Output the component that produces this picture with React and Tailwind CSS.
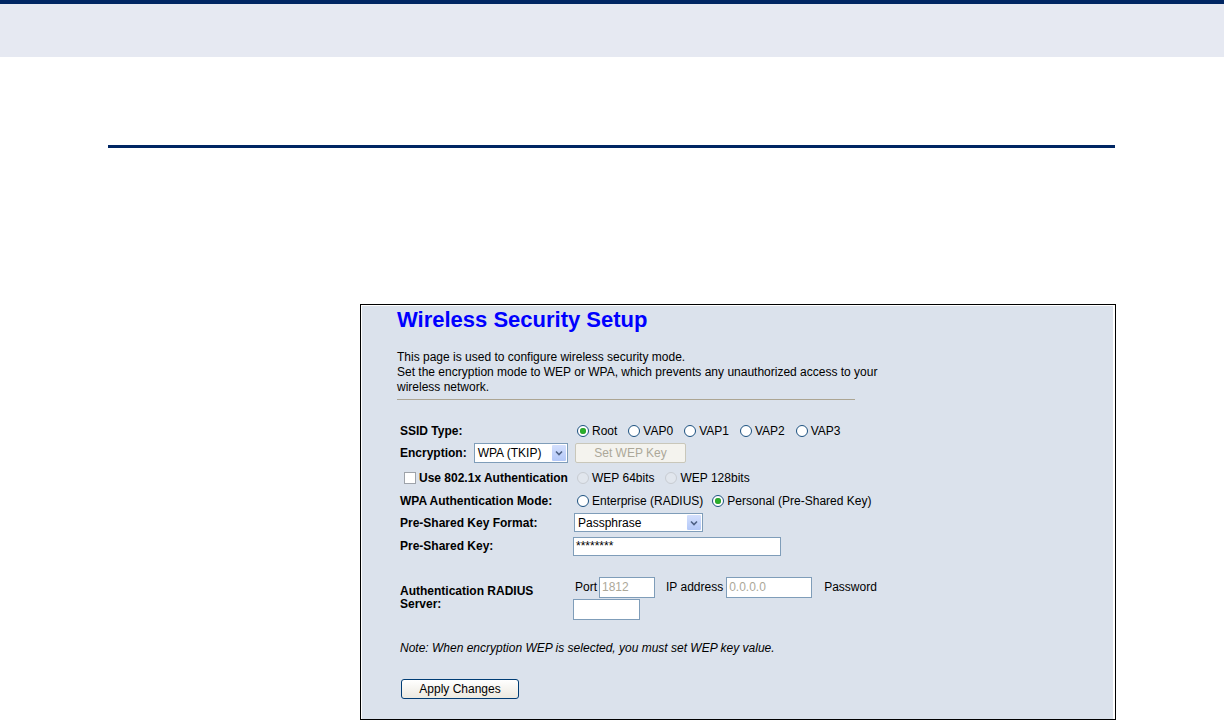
import React from "react";

function Radio({ checked = false, disabled = false }) {
  if (disabled) {
    return (
      <span className="inline-block w-[12px] h-[12px] rounded-full border border-[#c8ccd2] bg-[#e1e6ed] shrink-0" />
    );
  }
  return (
    <span className="inline-flex items-center justify-center w-[12px] h-[12px] rounded-full border border-[#1c5180] bg-white shrink-0">
      {checked && <span className="block w-[6px] h-[6px] rounded-full bg-[#2bb02b] shadow-[inset_0_0_1px_#0a6a0a]" />}
    </span>
  );
}

function RadioOpt({ label, checked, disabled }) {
  return (
    <span className="inline-flex items-center gap-[3px]">
      <Radio checked={checked} disabled={disabled} />
      <span className="text-black">{label}</span>
    </span>
  );
}

function Select({ value, width, height }) {
  return (
    <div
      className="flex items-center justify-between border border-[#7f9db9] bg-white"
      style={{ width, height }}
    >
      <span className="pl-[3px] text-[12px] leading-none text-black">{value}</span>
      <span className="flex items-center justify-center h-full w-[16px] border border-white bg-gradient-to-b from-[#d4e0fd] to-[#b3c8f8] rounded-[2px]">
        <svg width="8" height="6" viewBox="0 0 8 6">
          <path d="M1 1.5 L4 4.5 L7 1.5" fill="none" stroke="#4d6185" strokeWidth="1.6" />
        </svg>
      </span>
    </div>
  );
}

function TextInput({ value = "", width, height = 21, gray = false }) {
  return (
    <div
      className={`flex items-center border border-[#7f9db9] bg-white pl-[2px] text-[12px] leading-none ${gray ? "text-[#aca899]" : "text-black"}`}
      style={{ width, height }}
    >
      {value}
    </div>
  );
}

export default function App() {
  return (
    <div className="w-[1224px] h-[720px] bg-white overflow-hidden font-['Liberation_Sans',Arial,sans-serif]">
      <div className="h-[4px] bg-[#002663]" />
      <div className="h-[53px] bg-[#e6e9f2]" />
      <div className="mt-[88px] ml-[108px] w-[1007px] h-[3px] bg-[#002663]" />

      <div className="mt-[156px] ml-[360px] w-[756px] h-[416px] border border-black bg-[#dbe2ec]">
        <div className="h-full border-l border-t border-r-2 border-white pl-[35px]">
          <h1 className="mt-[1px] text-[22px] leading-[26px] font-bold text-[#0000ff]">Wireless Security Setup</h1>

          <div className="mt-[17px] text-[12px] leading-[15px] text-black">
            <div>This page is used to configure wireless security mode.</div>
            <div>Set the encryption mode to WEP or WPA, which prevents any unauthorized access to your</div>
            <div>wireless network.</div>
          </div>

          <div className="mt-[4px] w-[458px] h-[1px] bg-[#aca593]" />

          <div className="mt-[20px] pl-[3px] text-[12px] text-black">
            {/* SSID Type */}
            <div className="flex items-center h-[21px]">
              <div className="w-[173px] font-bold">SSID Type:</div>
              <div className="flex items-center gap-[11px] ml-[4px]">
                <RadioOpt label="Root" checked />
                <RadioOpt label="VAP0" />
                <RadioOpt label="VAP1" />
                <RadioOpt label="VAP2" />
                <RadioOpt label="VAP3" />
              </div>
            </div>

            {/* Encryption */}
            <div className="flex items-center h-[24px]">
              <div className="w-[175px] flex items-center">
                <span className="font-bold">Encryption:</span>
                <span className="ml-[7px]">
                  <Select value="WPA (TKIP)" width={94} height={20} />
                </span>
              </div>
              <div className="w-[111px] h-[20px] flex items-center justify-center border border-[#c9c7ba] bg-[#f4f3ee] rounded-[2px] text-[#aca899]">
                Set WEP Key
              </div>
            </div>

            {/* 802.1x */}
            <div className="flex items-center h-[25px]">
              <div className="w-[173px] flex items-center">
                <span className="ml-[4px] w-[12px] h-[12px] border border-[#9ea3aa] bg-white" />
                <span className="ml-[3px] font-bold">Use 802.1x Authentication</span>
              </div>
              <div className="flex items-center gap-[11px] ml-[4px]">
                <RadioOpt label="WEP 64bits" disabled />
                <RadioOpt label="WEP 128bits" disabled />
              </div>
            </div>

            {/* WPA Auth Mode */}
            <div className="flex items-center h-[21px]">
              <div className="w-[173px] font-bold">WPA Authentication Mode:</div>
              <div className="flex items-center gap-[9px] ml-[4px]">
                <RadioOpt label="Enterprise (RADIUS)" />
                <RadioOpt label="Personal (Pre-Shared Key)" checked />
              </div>
            </div>

            {/* PSK Format */}
            <div className="flex items-center h-[23px]">
              <div className="w-[174px] font-bold">Pre-Shared Key Format:</div>
              <Select value="Passphrase" width={129} height={19} />
            </div>

            {/* PSK */}
            <div className="flex items-center h-[24px]">
              <div className="w-[173px] font-bold">Pre-Shared Key:</div>
              <TextInput value="********" width={208} height={19} />
            </div>

            {/* RADIUS */}
            <div className="flex items-center mt-[18px] h-[44px]">
              <div className="w-[173px] font-bold leading-[13px]">
                <div>Authentication RADIUS</div>
                <div>Server:</div>
              </div>
              <div className="flex flex-col gap-[1px]">
                <div className="flex items-center h-[21px]">
                  <span className="ml-[2px]">Port</span>
                  <span className="ml-[2px]">
                    <TextInput value="1812" width={56} height={21} gray />
                  </span>
                  <span className="ml-[11px]">IP address</span>
                  <span className="ml-[3px]">
                    <TextInput value="0.0.0.0" width={86} height={21} gray />
                  </span>
                  <span className="ml-[12px]">Password</span>
                </div>
                <TextInput value="" width={67} height={21} />
              </div>
            </div>

            {/* Note */}
            <div className="mt-[20px] h-[16px] leading-[16px] italic">
              Note: When encryption WEP is selected, you must set WEP key value.
            </div>

            {/* Apply */}
            <div className="mt-[23px] ml-[1px] w-[118px] h-[20px] flex items-center justify-center border border-[#003c74] rounded-[3px] bg-gradient-to-b from-white to-[#ece9e0] text-black">
              Apply Changes
            </div>
          </div>
        </div>
      </div>
    </div>
  );
}
